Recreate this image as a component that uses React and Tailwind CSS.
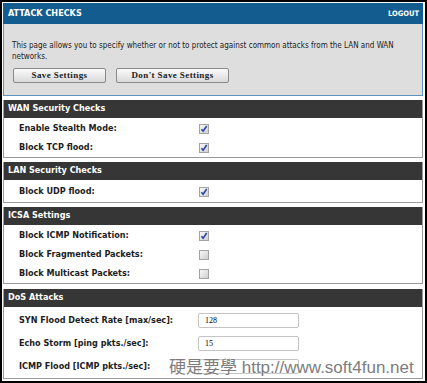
import React from "react";

const Check = ({ checked }) => (
  <span className="w-[10px] h-[10px] border border-[#a3a3a3] bg-linear-to-br from-[#f8f8f8] to-[#d0d0d0] flex items-center justify-center">
    {checked && (
      <svg width="8" height="8" viewBox="0 0 8 8">
        <path d="M1.4 4.3 L3.1 6.2 L6.7 1" stroke="#2a47a3" strokeWidth="1.6" fill="none" />
      </svg>
    )}
  </span>
);

const Section = ({ title, className, children }) => (
  <div className={`border border-t-0 border-[#9c9c9c] ${className}`}>
    <div className="h-[18px] bg-[#363636] text-white font-bold text-[9px] pl-[4px] flex items-center">
      {title}
    </div>
    {children}
  </div>
);

const CheckRow = ({ label, checked }) => (
  <div className="h-[19px] flex items-center">
    <span className="w-[195px] pl-[15px] font-bold text-[9px] text-[#1d1d1d]">{label}</span>
    <Check checked={checked} />
  </div>
);

const InputRow = ({ label, value }) => (
  <div className="h-[23px] flex items-center">
    <span className="w-[194px] pl-[15px] font-bold text-[9px] text-[#1d1d1d]">{label}</span>
    <div className="w-[101px] h-[15px] border border-[#c4c4c4] rounded-[2px] bg-white pl-[6px] flex items-center font-['Liberation_Serif',serif] text-[8px] text-black">
      {value}
    </div>
  </div>
);

const Btn = ({ children, w }) => (
  <button
    className={`${w} h-[15px] border border-[#8a8a8a] rounded-[2px] bg-linear-to-b from-[#fbfbfb] to-[#d9d9d9] font-['Liberation_Serif',serif] font-bold text-[9px] tracking-[0.4px] text-[#222] flex items-center justify-center`}
  >
    {children}
  </button>
);

export default function App() {
  return (
    <div className="relative w-[427px] h-[383px] overflow-hidden border-2 border-black bg-white pt-[1px] pl-[1px] pr-[2px] font-['DejaVu_Sans_Condensed','DejaVu_Sans',sans-serif]">
      {/* top panel */}
      <div>
        <div className="h-[21px] bg-[#135c8f] flex items-center justify-between pl-[5px] pr-[4px] text-white font-bold">
          <span className="text-[9px]">ATTACK CHECKS</span>
          <span className="text-[7.5px]">LOGOUT</span>
        </div>
        <div className="h-[72px] bg-[#dedede] border border-t-0 border-[#5f93bd] pl-[8px] pt-[16px]">
          <p className="text-[8px] leading-[11px] text-[#222]">
            This page allows you to specify whether or not to protect against common attacks from the LAN and WAN
            <br />
            networks.
          </p>
          <div className="flex gap-[10px] mt-[6px] pl-[1px]">
            <Btn w="w-[93px]">Save Settings</Btn>
            <Btn w="w-[113px]">Don't Save Settings</Btn>
          </div>
        </div>
      </div>

      <Section title="WAN Security Checks" className="mt-[4px]">
        <div className="pt-[1px]">
          <CheckRow label="Enable Stealth Mode:" checked />
          <CheckRow label="Block TCP flood:" checked />
        </div>
      </Section>

      <Section title="LAN Security Checks" className="mt-[4px]">
        <div className="pt-[2px] pb-[1px]">
          <CheckRow label="Block UDP flood:" checked />
        </div>
      </Section>

      <Section title="ICSA Settings" className="mt-[4px]">
        <div className="pt-[1px]">
          <CheckRow label="Block ICMP Notification:" checked />
          <CheckRow label="Block Fragmented Packets:" />
          <CheckRow label="Block Multicast Packets:" />
        </div>
      </Section>

      <Section title="DoS Attacks" className="mt-[5px]">
        <div className="pt-[2px]">
          <InputRow label="SYN Flood Detect Rate [max/sec]:" value="128" />
          <InputRow label="Echo Storm [ping pkts./sec]:" value="15" />
          <InputRow label="ICMP Flood [ICMP pkts./sec]:" value="" />
        </div>
      </Section>

      {/* watermark */}
      <div className="absolute left-[167px] top-[356px] text-[17px] leading-[20px] text-[#7d7d7d] font-['Liberation_Sans','Noto_Sans_CJK_TC',sans-serif] whitespace-nowrap [text-shadow:0_0_2px_white]">
        硬是要學 http://www.soft4fun.net
      </div>
    </div>
  );
}
